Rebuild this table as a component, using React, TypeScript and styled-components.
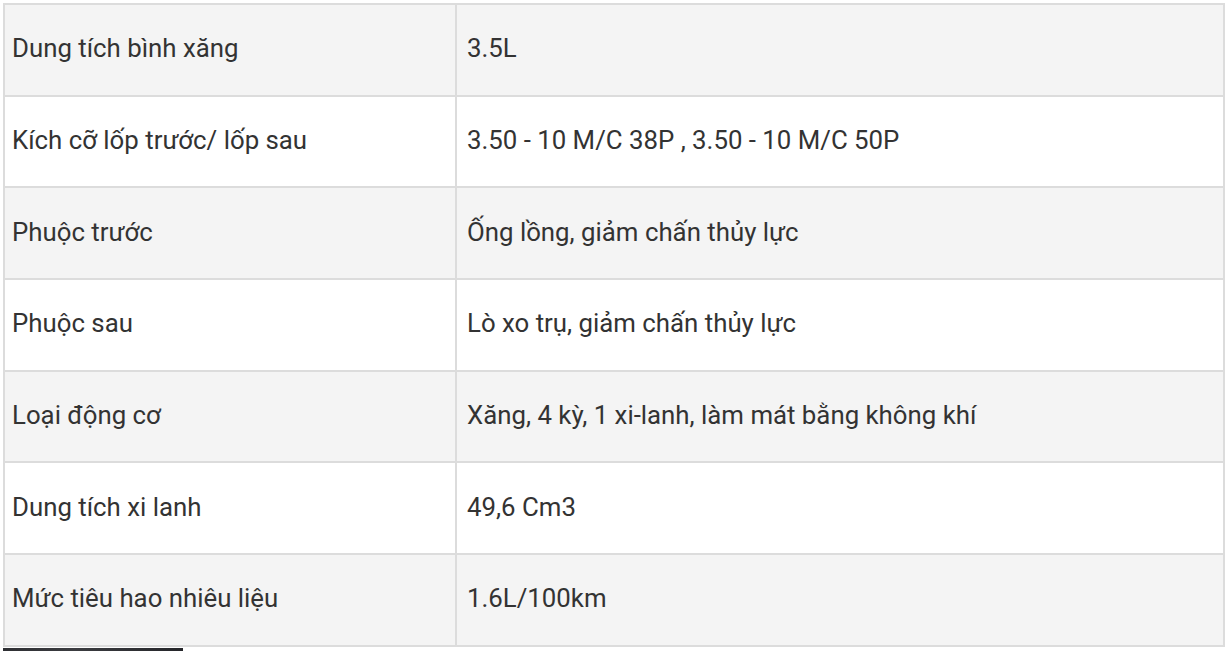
import React from "react";
import styled, { createGlobalStyle } from "styled-components";

const rows: [string, string][] = [
  ["Dung tích bình xăng", "3.5L"],
  ["Kích cỡ lốp trước/ lốp sau", "3.50 - 10 M/C 38P , 3.50 - 10 M/C 50P"],
  ["Phuộc trước", "Ống lồng, giảm chấn thủy lực"],
  ["Phuộc sau", "Lò xo trụ, giảm chấn thủy lực"],
  ["Loại động cơ", "Xăng, 4 kỳ, 1 xi-lanh, làm mát bằng không khí"],
  ["Dung tích xi lanh", "49,6 Cm3"],
  ["Mức tiêu hao nhiêu liệu", "1.6L/100km"],
];

const GlobalStyle = createGlobalStyle`
  body {
    margin: 0;
    background: #ffffff;
    font-family: Roboto, "Noto Sans", Arial, sans-serif;
    overflow: hidden;
  }
`;

const Page = styled.div`
  padding: 3px 0 0 3px;
`;

const Table = styled.table`
  width: 1222px;
  border-collapse: collapse;
  table-layout: fixed;
  border: 2px solid #dcdcdc;
`;

const Row = styled.tr<{ $shaded: boolean }>`
  height: 91.7px;
  background: ${(p) => (p.$shaded ? "#f4f4f4" : "#ffffff")};
`;

const Cell = styled.td<{ $first?: boolean }>`
  width: ${(p) => (p.$first ? "436px" : "auto")};
  padding: 0 ${(p) => (p.$first ? "7px" : "10px")} 3px;
  border: 2px solid #dcdcdc;
  font-size: 25.8px;
  color: #333333;
  vertical-align: middle;
  white-space: nowrap;
`;

const Picture = styled.div`
  width: 180px;
  height: 4px;
  margin-top: 1px;
  background: linear-gradient(90deg, #2e2f33, #3b3c40 40%, #25262a);
`;

export default function App() {
  return (
    <Page>
      <GlobalStyle />
      <Table>
        <tbody>
          {rows.map(([k, v], i) => (
            <Row key={k} $shaded={i % 2 === 0}>
              <Cell $first>{k}</Cell>
              <Cell>{v}</Cell>
            </Row>
          ))}
        </tbody>
      </Table>
      <Picture />
    </Page>
  );
}
